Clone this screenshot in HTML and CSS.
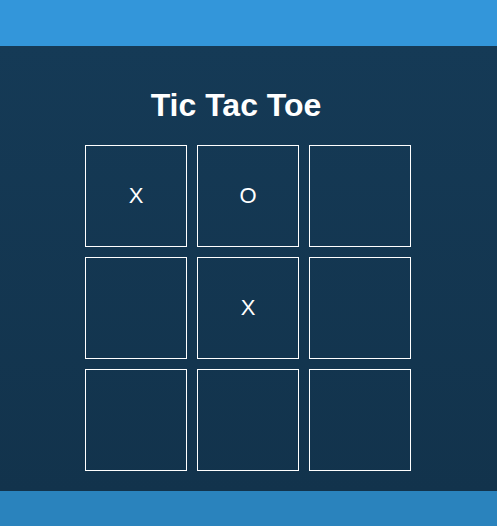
FILE: index.html
```html
<!DOCTYPE html>
<html>
<head>
<meta charset="utf-8">
<link rel="stylesheet" href="styles.css">
</head>
<body>
<header class="topbar"></header>
<main class="game">
  <h1 class="title">Tic Tac Toe</h1>
  <div class="board">
    <div class="cell">X</div>
    <div class="cell">O</div>
    <div class="cell"></div>
    <div class="cell"></div>
    <div class="cell">X</div>
    <div class="cell"></div>
    <div class="cell"></div>
    <div class="cell"></div>
    <div class="cell"></div>
  </div>
</main>
<footer class="bottombar"></footer>
</body>
</html>
```
FILE: styles.css
```css
html, body {
  margin: 0;
  padding: 0;
}
body {
  font-family: "Liberation Sans", Arial, sans-serif;
  color: #fff;
  display: flex;
  flex-direction: column;
  height: 526px;
  overflow: hidden;
}
.topbar {
  height: 46px;
  background: #3396da;
  flex: none;
}
.game {
  height: 445px;
  flex: none;
  box-sizing: border-box;
  padding-top: 39px;
  background: linear-gradient(#153a56, #12334c);
  display: flex;
  flex-direction: column;
  align-items: center;
}
.title {
  margin: 0;
  font-size: 32px;
  line-height: 40px;
  font-weight: bold;
  padding-right: 25px;
}
.board {
  margin-top: 20px;
  margin-right: 1px;
  display: grid;
  grid-template-columns: repeat(3, 102px);
  grid-auto-rows: 102px;
  gap: 10px;
}
.cell {
  border: 1px solid #fff;
  display: flex;
  align-items: center;
  justify-content: center;
  font-size: 22px;
}
.bottombar {
  flex: 1;
  background: #2a83bd;
}
```
